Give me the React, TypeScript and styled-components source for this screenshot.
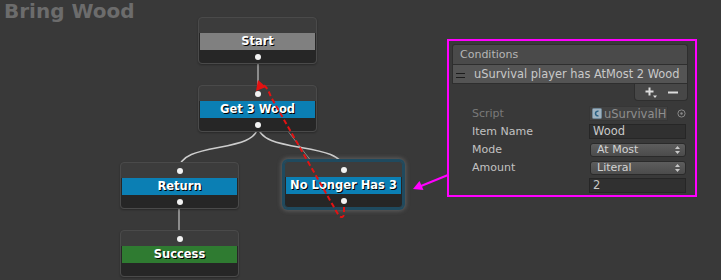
import React from 'react';
import styled, { createGlobalStyle } from 'styled-components';

const GlobalStyle = createGlobalStyle`
  html, body {
    margin: 0;
    padding: 0;
    background: #393939;
  }
  body {
    font-family: "DejaVu Sans", Verdana, sans-serif;
  }
`;

const Canvas = styled.div`
  position: relative;
  width: 721px;
  height: 280px;
  overflow: hidden;
  background: #393939;
`;

const Title = styled.h1`
  margin: 0;
  padding: 1px 0 0 4px;
  font: bold 20px/20px "DejaVu Sans", sans-serif;
  color: #6c6c6c;
`;

const Layer = styled.svg<{ $z: number }>`
  position: absolute;
  left: 0;
  top: 0;
  z-index: ${({ $z }) => $z};
  pointer-events: none;
`;

const NodeBox = styled.div<{ $x: number; $y: number; $selected?: boolean }>`
  position: absolute;
  z-index: 1;
  left: ${({ $x }) => $x}px;
  top: ${({ $y }) => $y}px;
  width: 119px;
  height: 47px;
  box-sizing: border-box;
  display: flex;
  flex-direction: column;
  border-radius: 4px;
  border: 1px solid ${({ $selected }) => ($selected ? '#1f4a5f' : '#4a4a4a')};
  background: linear-gradient(#3c3c3c 0 15px, #262626 15px);
  box-shadow: ${({ $selected }) =>
    $selected
      ? '0 0 0 2px #1f4a5f, 0 0 4px 3px rgba(170, 170, 170, 0.35)'
      : '0 1px 2px rgba(0, 0, 0, 0.3)'};
`;

const NodeHeader = styled.div`
  height: 15px;
  display: flex;
  align-items: center;
  justify-content: center;
`;

const NodeFooter = styled.div`
  flex: 1;
  display: flex;
  align-items: center;
  justify-content: center;
  padding-top: 1px;
`;

const LabelBar = styled.div<{ $color: string }>`
  height: 17px;
  margin: 0 1px;
  background: ${({ $color }) => $color};
  color: #fff;
  font: bold 11.5px/17px "DejaVu Sans", sans-serif;
  text-align: center;
  white-space: nowrap;
  text-shadow: 1px 1px 0 #000;
`;

const Dot = styled.span`
  width: 6px;
  height: 6px;
  border-radius: 50%;
  background: #f2f2f2;
`;

type NodeProps = {
  x: number;
  y: number;
  label: string;
  color: string;
  input?: boolean;
  output?: boolean;
  selected?: boolean;
};

const Node = ({ x, y, label, color, input, output, selected }: NodeProps) => (
  <NodeBox $x={x} $y={y} $selected={selected}>
    <NodeHeader>{input && <Dot />}</NodeHeader>
    <LabelBar $color={color}>{label}</LabelBar>
    <NodeFooter>{output && <Dot />}</NodeFooter>
  </NodeBox>
);

const Inspector = styled.div`
  position: absolute;
  z-index: 3;
  left: 447px;
  top: 39px;
  width: 250px;
  height: 158px;
  box-sizing: border-box;
  border: 2px solid #ff00ff;
  padding: 3px 7px 0 3px;
  display: flex;
  flex-direction: column;
  font: 11px "DejaVu Sans", sans-serif;
  background: #393939;
`;

const List = styled.div`
  display: flex;
  flex-direction: column;
`;

const ListHeader = styled.div`
  height: 19px;
  line-height: 19px;
  padding-left: 7px;
  background: #4a4a4a;
  border: 1px solid #2e2e2e;
  border-bottom: none;
  border-radius: 3px 3px 0 0;
  color: #b6b6b6;
`;

const ListRow = styled.div`
  height: 18px;
  display: flex;
  align-items: center;
  gap: 9px;
  padding-left: 3px;
  background: #545454;
  border: 1px solid #2e2e2e;
  color: #c9c9c9;
  font-size: 11.4px;
  white-space: nowrap;
`;

const Handle = styled.span`
  width: 9px;
  height: 3px;
  margin-top: 3px;
  border-top: 1px solid #1c1c1c;
  border-bottom: 1px solid #1c1c1c;
`;

const ListFooter = styled.div`
  align-self: flex-end;
  width: 54px;
  height: 17px;
  box-sizing: border-box;
  display: flex;
  align-items: center;
  justify-content: space-around;
  padding: 0 4px;
  background: #474747;
  border: 1px solid #2e2e2e;
  border-top: none;
  border-radius: 0 0 4px 4px;
`;

const Props = styled.div`
  display: flex;
  flex-direction: column;
  gap: 3px;
  margin-top: 5px;
  padding-left: 20px;
`;

const PropRow = styled.div`
  display: grid;
  grid-template-columns: 117px 97px;
  height: 15px;
  align-items: center;
`;

const PropLabel = styled.span<{ $dim?: boolean }>`
  color: ${({ $dim }) => ($dim ? '#7a7a7a' : '#c2c2c2')};
`;

const ObjectCell = styled.div`
  display: flex;
  align-items: center;
  gap: 9px;
`;

const ObjectField = styled.div`
  width: 79px;
  height: 15px;
  box-sizing: border-box;
  display: flex;
  align-items: center;
  gap: 2px;
  padding-left: 2px;
  overflow: hidden;
  white-space: nowrap;
  background: #414141;
  border: 1px solid #363636;
  color: #8f8f8f;
  font-size: 11.5px;
`;

const TextField = styled.div`
  height: 15px;
  box-sizing: border-box;
  padding-left: 3px;
  line-height: 13px;
  background: #303030;
  border: 1px solid #262626;
  color: #c8c8c8;
  font-size: 11.5px;
`;

const Popup = styled.div`
  height: 14px;
  box-sizing: border-box;
  margin-left: 1px;
  padding: 0 5px 0 6px;
  display: flex;
  align-items: center;
  justify-content: space-between;
  background: linear-gradient(#5d5d5d, #4b4b4b);
  border: 1px solid #2a2a2a;
  border-radius: 3px;
  color: #d2d2d2;
  line-height: 12px;
`;

const ScriptIcon = () => (
  <svg width="10" height="11" viewBox="0 0 10 11">
    <rect x="0.5" y="0.5" width="9" height="10" rx="1" fill="#9fb2c0" stroke="#6f8797" />
    <path d="M6.5 3.3 A2.3 2.3 0 1 0 6.5 7.7" fill="none" stroke="#2f6485" strokeWidth="1.6" />
  </svg>
);

const Picker = () => (
  <svg width="9" height="9" viewBox="0 0 9 9">
    <circle cx="4.5" cy="4.5" r="3.6" fill="none" stroke="#8a8a8a" />
    <circle cx="4.5" cy="4.5" r="1.2" fill="#8a8a8a" />
  </svg>
);

const UpDown = () => (
  <svg width="5" height="8" viewBox="0 0 5 8">
    <path d="M0 3 L2.5 0 L5 3 Z M0 5 L2.5 8 L5 5 Z" fill="#c8c8c8" />
  </svg>
);

const PlusIcon = () => (
  <svg width="12" height="11" viewBox="0 0 12 11">
    <path d="M4.5 0.5 V8.5 M0.5 4.5 H8.5" stroke="#dcdcdc" strokeWidth="2" />
    <path d="M8 8.5 H12 L10 11 Z" fill="#dcdcdc" />
  </svg>
);

const MinusIcon = () => (
  <svg width="10" height="3" viewBox="0 0 10 3">
    <path d="M0 1.5 H10" stroke="#dcdcdc" strokeWidth="2" />
  </svg>
);

export default function App() {
  return (
    <>
      <GlobalStyle />
      <Canvas>
        <Title>Bring Wood</Title>

        <Layer $z={0} width="721" height="280">
          <line x1="258" y1="58" x2="258" y2="93" stroke="#8c8c8c" strokeWidth="2" />
          <line x1="179" y1="203" x2="179" y2="238" stroke="#8c8c8c" strokeWidth="2" />
          <line x1="344" y1="203" x2="258" y2="93" stroke="#858585" strokeWidth="1" />
          <path d="M258,125 C258,155 179,140 179,170" fill="none" stroke="#cdcdcd" strokeWidth="1.5" />
          <path d="M258,125 C258,155 344,140 344,170" fill="none" stroke="#cdcdcd" strokeWidth="1.5" />
        </Layer>

        <Node x={198} y={17} label="Start" color="#808080" output />
        <Node x={198} y={85} label="Get 3 Wood" color="#0b7fb4" input output />
        <Node x={120} y={162} label="Return" color="#0b7fb4" input output />
        <Node x={120} y={230} label="Success" color="#2f7b31" input />
        <Node x={284} y={161} label="No Longer Has 3" color="#0b7fb4" input output selected />

        <Layer $z={2} width="721" height="280">
          <path
            d="M344,207 L344,213 Q344,219 339,216 L271,97 Q267,86 263,85"
            fill="none"
            stroke="#e41212"
            strokeWidth="2"
            strokeDasharray="5 3"
          />
          <polygon points="256,91 258,80 266,87" fill="#e41212" />
          <line x1="448" y1="175" x2="421" y2="186" stroke="#ff00ff" strokeWidth="2" />
          <polygon points="413,189 423.5,190 419.5,181" fill="#ff00ff" />
        </Layer>

        <Inspector>
          <List>
            <ListHeader>Conditions</ListHeader>
            <ListRow>
              <Handle />
              uSurvival player has AtMost 2 Wood
            </ListRow>
            <ListFooter>
              <PlusIcon />
              <MinusIcon />
            </ListFooter>
          </List>
          <Props>
            <PropRow>
              <PropLabel $dim>Script</PropLabel>
              <ObjectCell>
                <ObjectField>
                  <ScriptIcon />
                  uSurvivalH
                </ObjectField>
                <Picker />
              </ObjectCell>
            </PropRow>
            <PropRow>
              <PropLabel>Item Name</PropLabel>
              <TextField>Wood</TextField>
            </PropRow>
            <PropRow>
              <PropLabel>Mode</PropLabel>
              <Popup>
                At Most
                <UpDown />
              </Popup>
            </PropRow>
            <PropRow>
              <PropLabel>Amount</PropLabel>
              <Popup>
                Literal
                <UpDown />
              </Popup>
            </PropRow>
            <PropRow>
              <span />
              <TextField>2</TextField>
            </PropRow>
          </Props>
        </Inspector>
      </Canvas>
    </>
  );
}
